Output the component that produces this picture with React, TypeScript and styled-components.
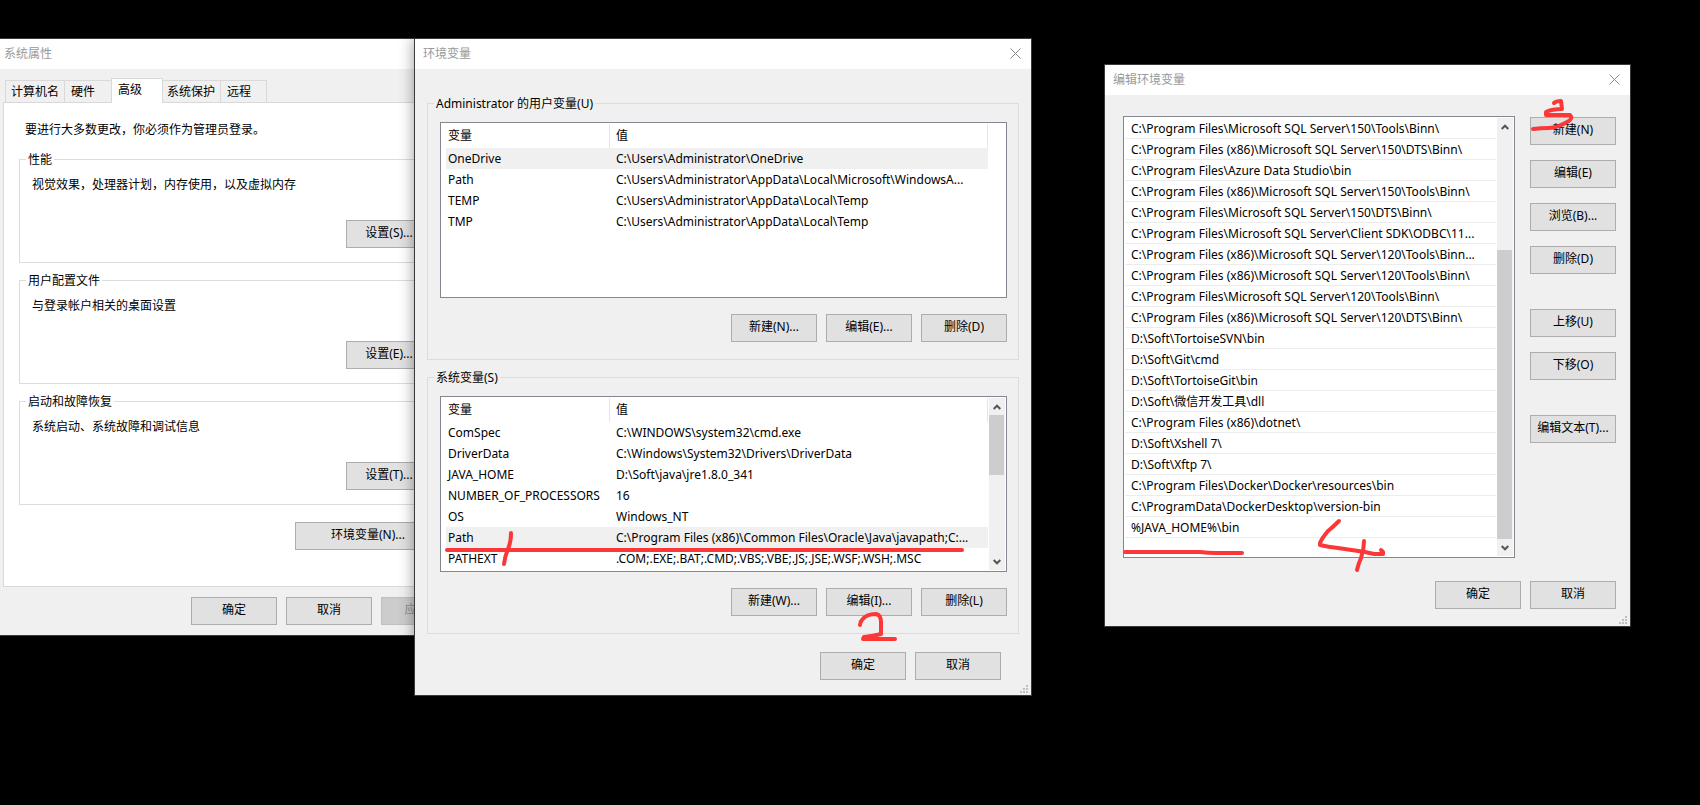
import React from "react";
import styled, { createGlobalStyle, css } from "styled-components";

const GlobalStyle = createGlobalStyle`
  *, *::before, *::after { box-sizing: border-box; }
  body {
    margin: 0;
    background: #000;
    color: #000;
    font-family: "Noto Sans", "Noto Sans CJK SC", sans-serif;
    font-size: 12px;
    line-height: 16px;
  }
  button { font: inherit; color: inherit; }
`;

const Desktop = styled.main`
  position: relative;
  min-height: 100vh;
  overflow: hidden;
  background: #000;
`;

const Window = styled.section<{ $x: number; $y: number; $w: number }>`
  position: absolute;
  left: ${(p) => p.$x}px;
  top: ${(p) => p.$y}px;
  width: ${(p) => p.$w}px;
  display: flex;
  flex-direction: column;
  border: 1px solid #3a3a3a;
  background: #f0f0f0;
  box-shadow: 0 0 14px rgba(0, 0, 0, 0.4);
`;

const TitleBar = styled.header`
  display: flex;
  align-items: center;
  justify-content: space-between;
  height: 30px;
  padding: 0 10px 0 8px;
  background: #fff;
`;

const Title = styled.h1`
  margin: 0;
  font-size: 12px;
  font-weight: 400;
  color: #999;
`;

const CloseButton = styled.button`
  display: flex;
  padding: 0 0 2px;
  border: 0;
  background: none;
  color: #8a8a8a;
`;

const PushButton = styled.button<{ $wide?: boolean }>`
  width: ${(p) => (p.$wide ? 146 : 86)}px;
  height: 28px;
  flex: none;
  padding: 0 0 2px;
  border: 1px solid #adadad;
  background: #e1e1e1;
  white-space: nowrap;
  &:disabled {
    border-color: #bfbfbf;
    background: #ccc;
    color: #8f8f8f;
  }
`;

const ButtonRow = styled.div<{ $top: number; $right?: number }>`
  display: flex;
  justify-content: flex-end;
  gap: 9px;
  padding: ${(p) => p.$top}px ${(p) => p.$right ?? 0}px 0 0;
`;

const TabStrip = styled.div`
  display: flex;
  align-items: flex-end;
  height: 33px;
  padding-left: 9px;
`;

const Tab = styled.button<{ $w: number }>`
  width: ${(p) => p.$w}px;
  height: 22px;
  padding: 0 0 0 6px;
  border: 1px solid #d9d9d9;
  border-width: 1px 1px 0 0;
  background: #f0f0f0;
  text-align: left;
  white-space: nowrap;
  &:first-child { border-left-width: 1px; padding-left: 5px; }
  &[aria-selected="true"] {
    height: 25px;
    margin: 0 0 -1px -1px;
    padding: 0 0 2px 6px;
    border-left-width: 1px;
    background: #fff;
    z-index: 1;
  }
  &[aria-selected="true"] + & { padding-left: 4px; }
`;

const TabPanel = styled.div`
  display: flex;
  flex-direction: column;
  gap: 2px;
  height: 485px;
  margin: 0 8px 0 7px;
  padding: 19px 15px 0;
  border: 1px solid #d9d9d9;
  background: #fff;
`;

const Lead = styled.p`
  margin: 0 0 10px 6px;
`;

const Group = styled.fieldset<{ $kind: "settings" | "variables" }>`
  display: flex;
  flex-direction: column;
  margin: 0;
  min-width: 0;
  border: 1px solid #dcdcdc;
  ${(p) =>
    p.$kind === "settings"
      ? css`
          height: 113px;
          margin-bottom: 6px;
          padding: 9px 17px 0 12px;
        `
      : css`
          height: 266px;
          margin: 0 12px 8px;
          padding: 10px 11px 0 12px;
        `}
`;

const Legend = styled.legend`
  margin-left: -6px;
  padding: 2px 2px 0;
`;

const Description = styled.p`
  margin: 0;
`;

const EnvButtonRow = styled.div`
  display: flex;
  justify-content: flex-end;
  padding: 9px 9px 0 0;
`;

const Groups = styled.div`
  display: flex;
  flex-direction: column;
  padding-top: 25px;
`;

const ListFrame = styled.div<{ $h: number }>`
  display: flex;
  justify-content: space-between;
  height: ${(p) => p.$h}px;
  padding: 1px;
  border: 1px solid #828790;
  background: #fff;
  overflow: hidden;
`;

const VarTable = styled.table`
  width: 542px;
  margin-left: 4px;
  align-self: flex-start;
  table-layout: fixed;
  border-spacing: 0;
`;

const HeadCell = styled.th<{ $w?: number }>`
  width: ${(p) => (p.$w ? p.$w + "px" : "auto")};
  height: 24px;
  padding: 0 2px;
  border-right: 1px solid #e5e5e5;
  font-weight: 400;
  text-align: left;
  & + & { padding-left: 6px; }
`;

const Row = styled.tr<{ $selected?: boolean }>`
  background: ${(p) => (p.$selected ? "#f0f0f0" : "transparent")};
`;

const Cell = styled.td`
  height: 21px;
  padding: 0 2px;
  white-space: nowrap;
  overflow: hidden;
  & + & { padding-left: 6px; }
`;

const PathList = styled.ul`
  flex: 1;
  margin: 0;
  padding: 0;
  list-style: none;
`;

const PathItem = styled.li`
  height: 21px;
  margin-right: 1px;
  padding: 3px 0 0 6px;
  border-bottom: 1px solid #ececec;
  white-space: nowrap;
  overflow: hidden;
`;

const ScrollTrack = styled.div`
  display: flex;
  flex-direction: column;
  justify-content: space-between;
  width: 16px;
  flex: none;
  background: #f0f0f0;
`;

const ScrollArrow = styled.button`
  display: flex;
  align-items: center;
  justify-content: center;
  width: 15px;
  height: 17px;
  padding: 0;
  border: 0;
  background: none;
  color: #555;
`;

const ScrollThumb = styled.div<{ $h: number; $end?: boolean }>`
  width: 15px;
  height: ${(p) => p.$h}px;
  margin: ${(p) => (p.$end ? "auto 0 0" : "0 0 auto")};
  background: #cdcdcd;
`;

const EditorBody = styled.div`
  display: flex;
  justify-content: space-between;
  padding: 21px 14px 0 18px;
`;

const PathFrame = styled(ListFrame)`
  width: 392px;
`;

const SideButtons = styled.div`
  display: flex;
  flex-direction: column;
  gap: 35px;
  padding-top: 1px;
`;

const SideGroup = styled.div`
  display: flex;
  flex-direction: column;
  gap: 15px;
`;

const BottomEdge = styled.div<{ $h: number }>`
  display: flex;
  align-items: flex-end;
  justify-content: flex-end;
  height: ${(p) => p.$h}px;
  padding: 0 3px 2px 0;
`;

const Ink = styled.svg`
  position: absolute;
  inset: 0;
  width: 100%;
  height: 100%;
  pointer-events: none;
  fill: none;
  stroke: #fb3737;
  stroke-width: 4;
  stroke-linecap: round;
  stroke-linejoin: round;
`;

function Caption({ id, text, closable = true }: { id: string; text: string; closable?: boolean }) {
  return (
    <TitleBar>
      <Title id={id}>{text}</Title>
      {closable && (
        <CloseButton type="button" aria-label="关闭">
          <svg width="11" height="11" viewBox="0 0 11 11" stroke="currentColor" fill="none">
            <path d="M.5.5l10 10M10.5.5l-10 10" />
          </svg>
        </CloseButton>
      )}
    </TitleBar>
  );
}

function Grip() {
  const dots = [[6, 0], [3, 3], [6, 3], [0, 6], [3, 6], [6, 6]];
  return (
    <svg width="8" height="8" fill="#bfbfbf" aria-hidden="true">
      {dots.map(([x, y]) => (
        <rect key={x + "-" + y} x={x} y={y} width="2" height="2" />
      ))}
    </svg>
  );
}

function ScrollBar({ thumb, end }: { thumb: number; end?: boolean }) {
  return (
    <ScrollTrack>
      <ScrollArrow type="button" aria-label="向上滚动">
        <svg width="8" height="6" viewBox="0 0 8 6" fill="none" stroke="currentColor" strokeWidth="2">
          <path d="M.7 5L4 1.700 7.300 5" />
        </svg>
      </ScrollArrow>
      <ScrollThumb $h={thumb} $end={end} />
      <ScrollArrow type="button" aria-label="向下滚动">
        <svg width="8" height="6" viewBox="0 0 8 6" fill="none" stroke="currentColor" strokeWidth="2">
          <path d="M.7 1L4 4.300 7.300 1" />
        </svg>
      </ScrollArrow>
    </ScrollTrack>
  );
}

const tabs = [
  { label: "计算机名", width: 60 },
  { label: "硬件", width: 47 },
  { label: "高级", width: 52, selected: true },
  { label: "系统保护", width: 58 },
  { label: "远程", width: 46 },
];

const settings = [
  { title: "性能", text: "视觉效果，处理器计划，内存使用，以及虚拟内存", button: "设置(S)..." },
  { title: "用户配置文件", text: "与登录帐户相关的桌面设置", button: "设置(E)..." },
  { title: "启动和故障恢复", text: "系统启动、系统故障和调试信息", button: "设置(T)..." },
];

type Variable = [name: string, value: string];

const userVariables: Variable[] = [
  ["OneDrive", "C:\\Users\\Administrator\\OneDrive"],
  ["Path", "C:\\Users\\Administrator\\AppData\\Local\\Microsoft\\WindowsA..."],
  ["TEMP", "C:\\Users\\Administrator\\AppData\\Local\\Temp"],
  ["TMP", "C:\\Users\\Administrator\\AppData\\Local\\Temp"],
];

const systemVariables: Variable[] = [
  ["ComSpec", "C:\\WINDOWS\\system32\\cmd.exe"],
  ["DriverData", "C:\\Windows\\System32\\Drivers\\DriverData"],
  ["JAVA_HOME", "D:\\Soft\\java\\jre1.8.0_341"],
  ["NUMBER_OF_PROCESSORS", "16"],
  ["OS", "Windows_NT"],
  ["Path", "C:\\Program Files (x86)\\Common Files\\Oracle\\Java\\javapath;C:..."],
  ["PATHEXT", ".COM;.EXE;.BAT;.CMD;.VBS;.VBE;.JS;.JSE;.WSF;.WSH;.MSC"],
];

const paths = [
  "C:\\Program Files\\Microsoft SQL Server\\150\\Tools\\Binn\\",
  "C:\\Program Files (x86)\\Microsoft SQL Server\\150\\DTS\\Binn\\",
  "C:\\Program Files\\Azure Data Studio\\bin",
  "C:\\Program Files (x86)\\Microsoft SQL Server\\150\\Tools\\Binn\\",
  "C:\\Program Files\\Microsoft SQL Server\\150\\DTS\\Binn\\",
  "C:\\Program Files\\Microsoft SQL Server\\Client SDK\\ODBC\\11...",
  "C:\\Program Files (x86)\\Microsoft SQL Server\\120\\Tools\\Binn...",
  "C:\\Program Files (x86)\\Microsoft SQL Server\\120\\Tools\\Binn\\",
  "C:\\Program Files\\Microsoft SQL Server\\120\\Tools\\Binn\\",
  "C:\\Program Files (x86)\\Microsoft SQL Server\\120\\DTS\\Binn\\",
  "D:\\Soft\\TortoiseSVN\\bin",
  "D:\\Soft\\Git\\cmd",
  "D:\\Soft\\TortoiseGit\\bin",
  "D:\\Soft\\微信开发工具\\dll",
  "C:\\Program Files (x86)\\dotnet\\",
  "D:\\Soft\\Xshell 7\\",
  "D:\\Soft\\Xftp 7\\",
  "C:\\Program Files\\Docker\\Docker\\resources\\bin",
  "C:\\ProgramData\\DockerDesktop\\version-bin",
  "%JAVA_HOME%\\bin",
];

const sideButtons = [
  ["新建(N)", "编辑(E)", "浏览(B)...", "删除(D)"],
  ["上移(U)", "下移(O)"],
  ["编辑文本(T)..."],
];

interface VariableGroupProps {
  title: string;
  rows: Variable[];
  selected: number;
  buttons: string[];
  thumb?: number;
}

function VariableGroup({ title, rows, selected, buttons, thumb }: VariableGroupProps) {
  return (
    <Group $kind="variables">
      <Legend>{title}</Legend>
      <ListFrame $h={176}>
        <VarTable>
          <thead>
            <tr>
              <HeadCell $w={164}>变量</HeadCell>
              <HeadCell>值</HeadCell>
            </tr>
          </thead>
          <tbody>
            {rows.map(([name, value], i) => (
              <Row key={name} $selected={i === selected} aria-selected={i === selected}>
                <Cell>{name}</Cell>
                <Cell>{value}</Cell>
              </Row>
            ))}
          </tbody>
        </VarTable>
        {thumb && <ScrollBar thumb={thumb} />}
      </ListFrame>
      <ButtonRow $top={16}>
        {buttons.map((label) => (
          <PushButton key={label} type="button">{label}</PushButton>
        ))}
      </ButtonRow>
    </Group>
  );
}

function SystemProperties() {
  return (
    <Window $x={-5} $y={38} $w={480} role="dialog" aria-labelledby="system-title">
      <Caption id="system-title" text="系统属性" closable={false} />
      <TabStrip role="tablist">
        {tabs.map((tab) => (
          <Tab key={tab.label} type="button" role="tab" aria-selected={!!tab.selected} $w={tab.width}>
            {tab.label}
          </Tab>
        ))}
      </TabStrip>
      <TabPanel role="tabpanel">
        <Lead>要进行大多数更改，你必须作为管理员登录。</Lead>
        {settings.map((group) => (
          <Group key={group.title} $kind="settings">
            <Legend>{group.title}</Legend>
            <Description>{group.text}</Description>
            <ButtonRow $top={27}>
              <PushButton type="button">{group.button}</PushButton>
            </ButtonRow>
          </Group>
        ))}
        <EnvButtonRow>
          <PushButton type="button" $wide>环境变量(N)...</PushButton>
        </EnvButtonRow>
      </TabPanel>
      <ButtonRow $top={10} $right={7}>
        <PushButton type="button">确定</PushButton>
        <PushButton type="button">取消</PushButton>
        <PushButton type="button" disabled>应用(A)</PushButton>
      </ButtonRow>
      <BottomEdge $h={10} />
    </Window>
  );
}

function EnvironmentVariables() {
  return (
    <Window $x={414} $y={38} $w={618} role="dialog" aria-labelledby="env-title">
      <Caption id="env-title" text="环境变量" />
      <Groups>
        <VariableGroup
          title="Administrator 的用户变量(U)"
          rows={userVariables}
          selected={0}
          buttons={["新建(N)...", "编辑(E)...", "删除(D)"]}
        />
        <VariableGroup
          title="系统变量(S)"
          rows={systemVariables}
          selected={5}
          buttons={["新建(W)...", "编辑(I)...", "删除(L)"]}
          thumb={60}
        />
      </Groups>
      <ButtonRow $top={10} $right={30}>
        <PushButton type="button">确定</PushButton>
        <PushButton type="button">取消</PushButton>
      </ButtonRow>
      <BottomEdge $h={15}><Grip /></BottomEdge>
    </Window>
  );
}

function EditVariable() {
  return (
    <Window $x={1104} $y={64} $w={527} role="dialog" aria-labelledby="edit-title">
      <Caption id="edit-title" text="编辑环境变量" />
      <EditorBody>
        <PathFrame $h={442}>
          <PathList>
            {paths.map((path, i) => (
              <PathItem key={i}>{path}</PathItem>
            ))}
          </PathList>
          <ScrollBar thumb={289} end />
        </PathFrame>
        <SideButtons>
          {sideButtons.map((group) => (
            <SideGroup key={group[0]}>
              {group.map((label) => (
                <PushButton key={label} type="button">{label}</PushButton>
              ))}
            </SideGroup>
          ))}
        </SideButtons>
      </EditorBody>
      <ButtonRow $top={23} $right={14}>
        <PushButton type="button">确定</PushButton>
        <PushButton type="button">取消</PushButton>
      </ButtonRow>
      <BottomEdge $h={17}><Grip /></BottomEdge>
    </Window>
  );
}

export default function App() {
  return (
    <>
      <GlobalStyle />
      <Desktop>
        <SystemProperties />
        <EnvironmentVariables />
        <EditVariable />
        <Ink aria-hidden="true">
          <path d="M447 550H962" />
          <path d="M511 533Q511 542 508 549T504 564" />
          <path d="M860 625Q860 622 862 620Q866 614 876 614Q881 615 881 622V634Q874 636 864 637L863 639H895" />
          <path d="M1554 103Q1556 101 1561 101L1562 109Q1552 109 1546 112V115H1570Q1573 118 1569 121Q1557 128 1549 128T1533 129" />
          <path d="M1125 552H1200Q1208 553 1216 553H1242" />
          <path d="M1339 521Q1333 527 1328 531Q1322 538 1320 543V545Q1328 547 1338 548L1365 552L1374 554H1383V552L1381 550" />
          <path d="M1364 541Q1364 550 1361 558Q1358 565 1357 570" />
        </Ink>
      </Desktop>
    </>
  );
}
